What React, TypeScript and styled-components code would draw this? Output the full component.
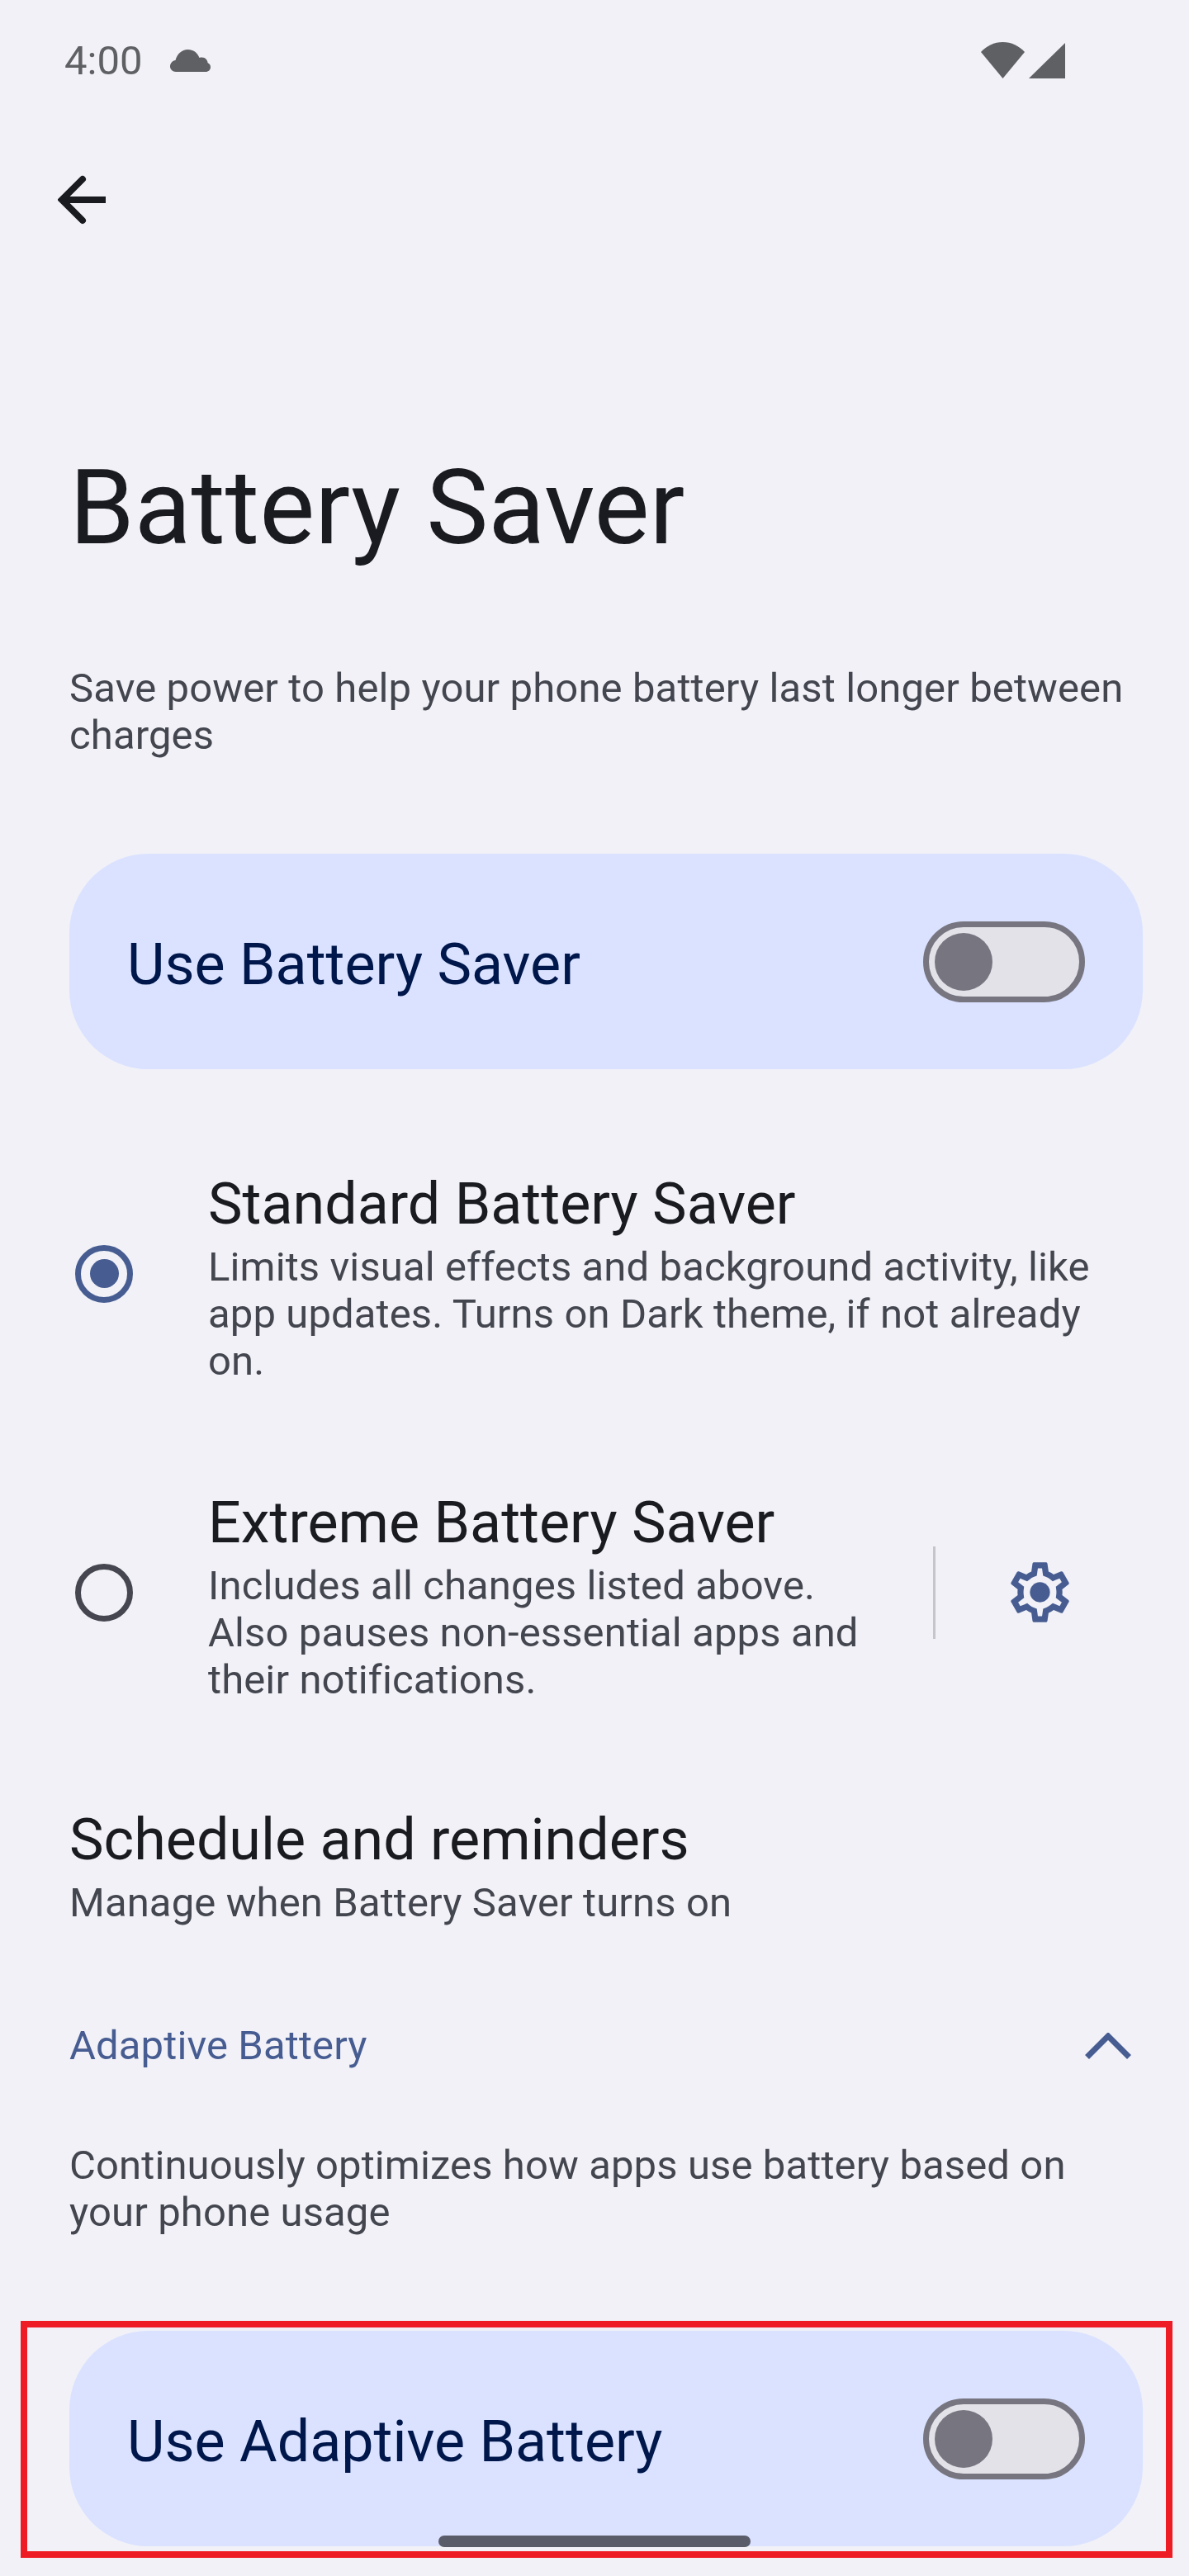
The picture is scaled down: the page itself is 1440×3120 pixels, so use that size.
import * as React from 'react';
import styled, { createGlobalStyle } from 'styled-components';

const GlobalStyle = createGlobalStyle`
  html, body {
    margin: 0;
    padding: 0;
    background: #f1f1f7;
  }
`;

const Page = styled.div`
  position: relative;
  width: 1440px;
  height: 3120px;
  overflow: hidden;
  background: #f1f1f7;
  font-family: Roboto, 'Liberation Sans', sans-serif;
  color: #1a1b20;
`;

const StatusBar = styled.div`
  display: flex;
  align-items: center;
  justify-content: space-between;
  height: 146px;
  padding: 0 150px 0 78px;
  box-sizing: border-box;
  color: #5f6064;
`;

const StatusGroup = styled.div<{ $gap: number }>`
  display: flex;
  align-items: center;
  gap: ${(props) => props.$gap}px;
`;

const Clock = styled.span`
  font-size: 49px;
  line-height: 57px;
`;

const Toolbar = styled.div`
  display: flex;
  align-items: center;
  height: 192px;
  padding-left: 70px;
`;

const Content = styled.div`
  padding: 202px 56px 0 84px;
`;

const Title = styled.h1`
  margin: 0;
  font-size: 126.4px;
  font-weight: 400;
  line-height: 150px;
`;

const Description = styled.p<{ $top?: number }>`
  margin: ${(props) => props.$top ?? 0}px 0 0;
  font-size: 49px;
  line-height: 57px;
  letter-spacing: 0.12px;
  color: #44464f;
`;

const SwitchCard = styled.div<{ $top: number }>`
  display: flex;
  align-items: center;
  justify-content: space-between;
  height: 261px;
  margin-top: ${(props) => props.$top}px;
  padding: 0 70px;
  box-sizing: border-box;
  border-radius: 96px;
  background: #dae2ff;
`;

const SwitchLabel = styled.span`
  padding-top: 6px;
  font-size: 70px;
  line-height: 90px;
  color: #00174b;
`;

const Track = styled.div`
  display: flex;
  align-items: center;
  width: 196px;
  height: 98px;
  padding-left: 7px;
  box-sizing: border-box;
  border: 7px solid #777680;
  border-radius: 49px;
  background: #e3e2e9;
`;

const Thumb = styled.div`
  width: 70px;
  height: 70px;
  border-radius: 50%;
  background: #777680;
`;

const OptionRow = styled.div<{ $top: number }>`
  display: flex;
  align-items: center;
  margin-top: ${(props) => props.$top}px;
`;

const RadioCell = styled.div`
  flex: none;
  width: 168px;
  margin-top: 2px;
  padding-left: 7px;
  box-sizing: border-box;
`;

const Radio = styled.div<{ $checked?: boolean }>`
  display: flex;
  align-items: center;
  justify-content: center;
  width: 70px;
  height: 70px;
  box-sizing: border-box;
  border: 7px solid ${(props) => (props.$checked ? '#475d92' : '#45464f')};
  border-radius: 50%;
`;

const RadioDot = styled.div`
  width: 35px;
  height: 35px;
  border-radius: 50%;
  background: #475d92;
`;

const OptionText = styled.div<{ $inset?: number }>`
  flex: 1;
  min-width: 0;
  padding-right: ${(props) => props.$inset ?? 0}px;
`;

const ItemTitle = styled.div`
  padding-top: 4px;
  font-size: 70px;
  line-height: 96px;
  color: #1a1b20;
`;

const Divider = styled.div`
  flex: none;
  width: 3px;
  height: 112px;
  margin: 2px 0 0 44px;
  background: #c5c5cb;
`;

const GearCell = styled.div`
  flex: none;
  display: flex;
  justify-content: center;
  width: 255px;
  margin: 2px -4px 0 0;
  padding-right: 2px;
  box-sizing: border-box;
  color: #475d92;
`;

const Section = styled.div<{ $top: number }>`
  margin-top: ${(props) => props.$top}px;
`;

const SectionHeader = styled.div<{ $top: number }>`
  display: flex;
  align-items: center;
  justify-content: space-between;
  margin-top: ${(props) => props.$top}px;
  padding-right: 14px;
  color: #475d92;
`;

const SectionTitle = styled.span`
  font-size: 49px;
  line-height: 57px;
  letter-spacing: 0.12px;
`;

const HomeBar = styled.div`
  position: absolute;
  left: 531px;
  top: 3071px;
  width: 378px;
  height: 14px;
  border-radius: 7px;
  background: #5a5c69;
`;

const Highlight = styled.div`
  position: absolute;
  left: 25px;
  top: 2811px;
  width: 1395px;
  height: 287px;
  box-sizing: border-box;
  border: 8px solid #ee1c25;
`;

const CloudIcon = () => (
  <svg width="49" height="27" viewBox="0 0 49 27" fill="currentColor">
    <path d="M7 27C3 27 0 24 0 20.5C0 16.5 3 13.5 6.5 13C8.5 5.5 14 0 21.5 0C28 0 33 3.5 35.5 10C36.5 9.6 37.5 9.5 38.5 9.5C43 9.5 45.5 13 45.5 16C47.5 17 49 18.8 49 21.2C49 24.5 46.5 27 43 27Z" />
  </svg>
);

const WifiIcon = () => (
  <svg width="53" height="44" viewBox="0 0 53 44" fill="currentColor">
    <path d="M0 12C7 4.500 16 0 26.500 0C37 0 46 4.500 53 12L26.500 44Z" />
  </svg>
);

const SignalIcon = () => (
  <svg width="44" height="43" viewBox="0 0 44 43" fill="currentColor">
    <path d="M44 0V43H0Z" />
  </svg>
);

const BackIcon = () => (
  <svg width="60" height="60" viewBox="0 0 60 60" fill="none" stroke="#1a1b20" strokeWidth="8">
    <path d="M58 30H8" />
    <path d="M30 5L5 30L30 55" strokeLinecap="round" />
  </svg>
);

const GearIcon = () => (
  <svg width="87" height="87" viewBox="0 0 24 24" fill="currentColor">
    <path d="M19.43 12.98c.04-.32.07-.64.07-.98 0-.34-.03-.66-.07-.98l2.11-1.65c.19-.15.24-.42.12-.64l-2-3.46c-.09-.16-.26-.25-.44-.25-.06 0-.12.01-.17.03l-2.49 1c-.52-.4-1.08-.73-1.69-.98l-.38-2.65C14.46 2.18 14.25 2 14 2h-4c-.25 0-.46.18-.49.42l-.38 2.65c-.61.25-1.17.59-1.69.98l-2.49-1c-.06-.02-.12-.03-.18-.03-.17 0-.34.09-.43.25l-2 3.46c-.13.22-.07.49.12.64l2.11 1.65c-.04.32-.07.65-.07.98 0 .33.03.66.07.98l-2.11 1.65c-.19.15-.24.42-.12.64l2 3.46c.09.16.26.25.44.25.06 0 .12-.01.17-.03l2.49-1c.52.4 1.08.73 1.69.98l.38 2.65c.03.24.24.42.49.42h4c.25 0 .46-.18.49-.42l.38-2.65c.61-.25 1.17-.59 1.69-.98l2.49 1c.06.02.12.03.18.03.17 0 .34-.09.43-.25l2-3.46c.12-.22.07-.49-.12-.64l-2.11-1.65zm-1.98-1.71c.04.31.05.52.05.73 0 .21-.02.43-.05.73l-.14 1.13.89.7 1.08.84-.7 1.21-1.27-.51-1.04-.42-.9.68c-.43.32-.84.56-1.25.73l-1.06.43-.16 1.13-.2 1.35h-1.4l-.19-1.35-.16-1.13-1.06-.43c-.43-.18-.83-.41-1.23-.71l-.91-.7-1.06.43-1.27.51-.7-1.21 1.08-.84.89-.7-.14-1.13c-.03-.31-.05-.54-.05-.74s.02-.43.05-.73l.14-1.13-.89-.7-1.08-.84.7-1.21 1.27.51 1.04.42.9-.68c.43-.32.84-.56 1.25-.73l1.06-.43.16-1.13.2-1.35h1.39l.19 1.35.16 1.13 1.06.43c.43.18.83.41 1.23.71l.91.7 1.06-.43 1.27-.51.7 1.21-1.07.85-.89.7.14 1.13z" />
    <circle cx="12" cy="12" r="3.35" />
  </svg>
);

const ChevronIcon = () => (
  <svg width="56" height="32" viewBox="0 0 56 32" fill="none" stroke="currentColor" strokeWidth="7">
    <path d="M2.500 29.500L28 4L53.500 29.500" />
  </svg>
);

const BatterySwitch = ({ label, top }: { label: string; top: number }) => (
  <SwitchCard $top={top}>
    <SwitchLabel>{label}</SwitchLabel>
    <Track>
      <Thumb />
    </Track>
  </SwitchCard>
);

const App = () => (
  <Page>
    <GlobalStyle />
    <StatusBar>
      <StatusGroup $gap={34}>
        <Clock>4:00</Clock>
        <CloudIcon />
      </StatusGroup>
      <StatusGroup $gap={5}>
        <WifiIcon />
        <SignalIcon />
      </StatusGroup>
    </StatusBar>
    <Toolbar>
      <BackIcon />
    </Toolbar>
    <Content>
      <Title>Battery Saver</Title>
      <Description $top={115}>
        Save power to help your phone battery last longer between charges
      </Description>
      <BatterySwitch label="Use Battery Saver" top={115} />
      <OptionRow $top={111}>
        <RadioCell>
          <Radio $checked>
            <RadioDot />
          </Radio>
        </RadioCell>
        <OptionText $inset={56}>
          <ItemTitle>Standard Battery Saver</ItemTitle>
          <Description>
            Limits visual effects and background activity, like app updates. Turns on Dark theme,
            if not already on.
          </Description>
        </OptionText>
      </OptionRow>
      <OptionRow $top={115}>
        <RadioCell>
          <Radio />
        </RadioCell>
        <OptionText>
          <ItemTitle>Extreme Battery Saver</ItemTitle>
          <Description>
            Includes all changes listed above. Also pauses non-essential apps and their
            notifications.
          </Description>
        </OptionText>
        <Divider />
        <GearCell>
          <GearIcon />
        </GearCell>
      </OptionRow>
      <Section $top={113}>
        <ItemTitle>Schedule and reminders</ItemTitle>
        <Description>Manage when Battery Saver turns on</Description>
      </Section>
      <SectionHeader $top={116}>
        <SectionTitle>Adaptive Battery</SectionTitle>
        <ChevronIcon />
      </SectionHeader>
      <Description $top={88}>
        Continuously optimizes how apps use battery based on your phone usage
      </Description>
      <BatterySwitch label="Use Adaptive Battery" top={115} />
    </Content>
    <HomeBar />
    <Highlight />
  </Page>
);

export default App;
